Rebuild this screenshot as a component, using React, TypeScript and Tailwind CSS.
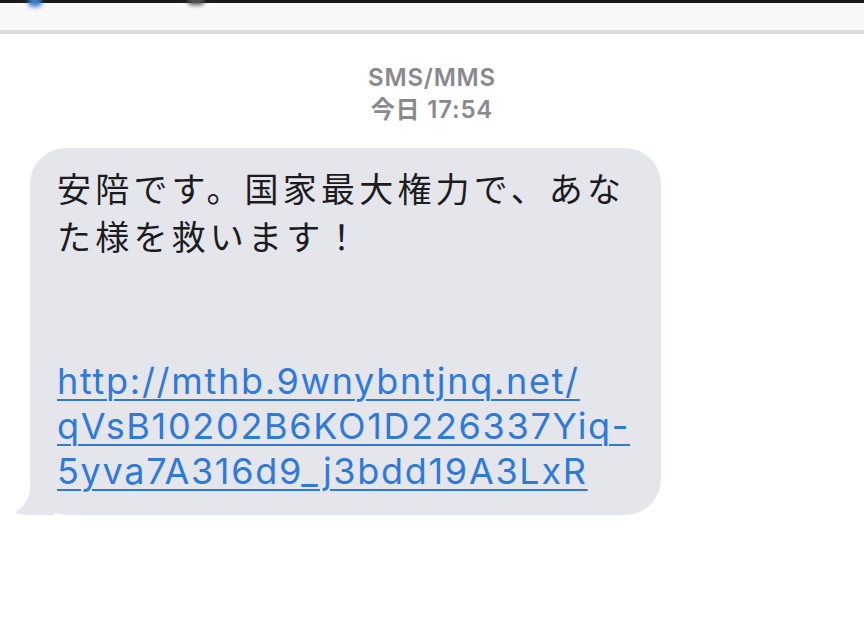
import React from "react";

export default function App() {
  return (
    <div
      className="w-[864px] h-[640px] bg-white overflow-hidden flex flex-col"
      style={{ fontFamily: 'Inter, "Noto Sans CJK JP", sans-serif' }}
    >
      <div className="h-[3px] bg-[#1a1a1a]" />
      <div className="relative h-[27px] bg-[#f8f8f8]">
        <div className="absolute left-[28px] top-[-6px] w-[14px] h-[10px] rounded-full bg-[#3f7fd0] blur-[2px]" />
        <div className="absolute left-[188px] top-[-6px] w-[16px] h-[8px] rounded-full bg-[#555] blur-[2px]" />
      </div>
      <div className="h-[4px] bg-[#dcdcdc]" />
      <div className="flex flex-col items-center pt-[28px] text-[#8a8a8e] font-semibold text-[24px] leading-[32px] tracking-[0.8px]">
        <div>SMS/MMS</div>
        <div>今日 17:54</div>
      </div>
      <div className="relative ml-[30px] mt-[22px] w-[631px] rounded-[36px] bg-[#e5e5ec] pl-[27px] pr-[10px] pt-[16px] pb-[21px]">
        <div className="absolute left-[-16px] bottom-0 w-[40px] h-[30px]">
          <svg width="40" height="30" viewBox="0 0 40 30">
            <path d="M40 0 L40 30 L16 30 Q6 30 1 27 Q12 22 16 6 L16 0 Z" fill="#e5e5ec" />
          </svg>
        </div>
        <div
          className="relative text-[#1c1c1e] text-[34px] leading-[48px] tracking-[4.2px]"
          style={{ fontFamily: '"Noto Sans CJK JP", sans-serif' }}
        >
          <div>安陪です。国家最大権力で、あな</div>
          <div>た様を救います！</div>
          <div>&nbsp;</div>
          <div>&nbsp;</div>
        </div>
        <div className="relative pt-[3px] text-[#2f7ad8] text-[36px] leading-[45px] underline decoration-[2px] underline-offset-[5px] tracking-[1.7px] whitespace-nowrap">
          <div>http://mthb.9wnybntjnq.net/</div>
          <div>qVsB10202B6KO1D226337Yiq-</div>
          <div>5yva7A316d9_j3bdd19A3LxR</div>
        </div>
      </div>
    </div>
  );
}
